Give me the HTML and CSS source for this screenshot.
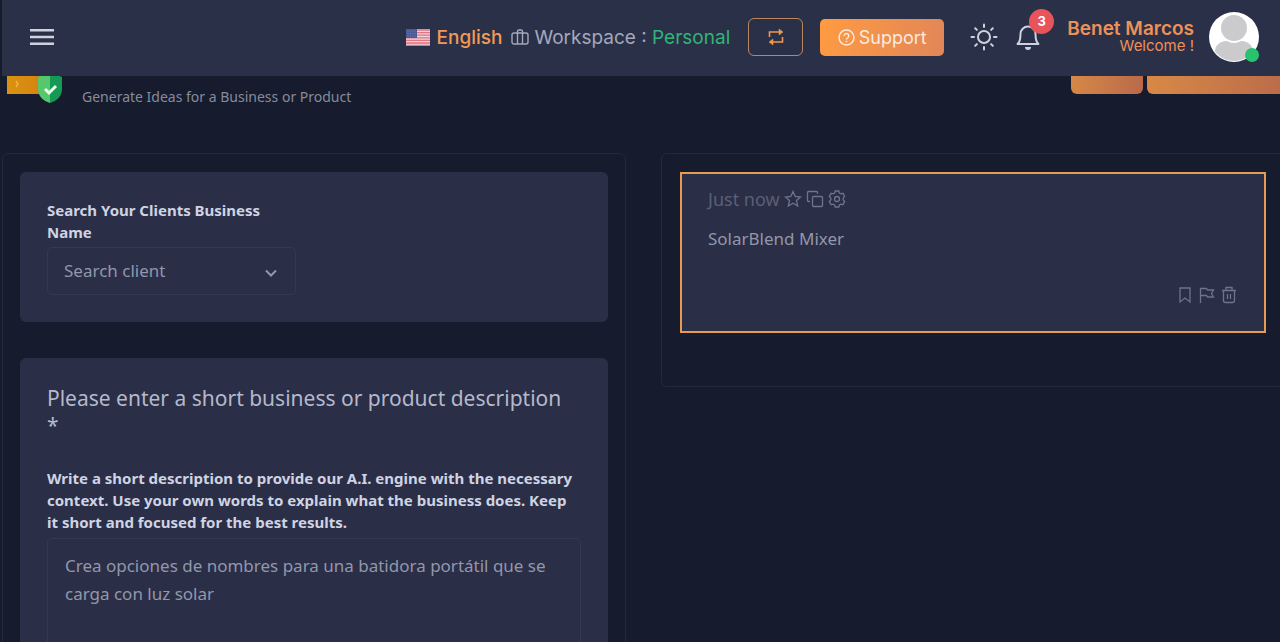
FILE: index.html
```html
<!DOCTYPE html>
<html lang="en">
<head>
<meta charset="utf-8">
<meta name="viewport" content="width=device-width, initial-scale=1">
<title>Generate Ideas</title>
<link rel="stylesheet" href="styles.css">
</head>
<body>
<div class="app">
  <header class="topbar">
    <button class="icon-btn menu" aria-label="Menu">
      <svg width="24" height="18" viewBox="0 0 24 18" stroke="currentColor" stroke-width="2.4"><path d="M0 2.2h24M0 9h24M0 15.8h24"/></svg>
    </button>
    <nav class="tools">
      <div class="locale">
        <a class="language" href="#">
          <svg width="24" height="17" viewBox="0 0 24 17"><rect width="24" height="17" fill="#efd3d8"/><path d="M0 1h24M0 3.6h24M0 6.2h24M0 8.8h24M0 11.4h24M0 14h24M0 16.5h24" stroke="#dc7682" stroke-width="1.3"/><rect width="11" height="9" fill="#4a5a94"/><path d="M1.5 2h9M1.5 4.5h9M1.5 7h9" stroke="#7582b2" stroke-dasharray="1 1.4"/></svg>
          <span>English</span>
        </a>
        <div class="workspace">
          <svg width="18" height="16" viewBox="0 0 18 16" fill="none" stroke="currentColor" stroke-width="1.4"><rect x="1" y="4" width="16" height="11" rx="2"/><path d="M6.500 15V2.500A1.500 1.500 0 0 1 8 1h2a1.500 1.500 0 0 1 1.500 1.500V15"/></svg>
          <span>Workspace : <span class="plan">Personal</span></span>
        </div>
      </div>
      <button class="swap" aria-label="Switch workspace">
        <svg width="18" height="20" viewBox="0 0 18 20" fill="none" stroke="currentColor" stroke-width="1.600"><path d="M2.500 10V5h11M15.500 10v5h-11"/><path d="M12 2l4 3-4 3zM6 12l-4 3 4 3z" fill="currentColor" stroke-width=".5"/></svg>
      </button>
      <button class="support">
        <svg width="17" height="17" viewBox="0 0 17 17" fill="none" stroke="currentColor" stroke-width="1.500"><circle cx="8.500" cy="8.500" r="7.500"/><path d="M6.200 6.800a2.300 2.300 0 1 1 3.500 2c-.8.5-1.200.8-1.200 1.600M8.500 11.800v1.400"/></svg>
        <span>Support</span>
      </button>
      <button class="icon-btn sun" aria-label="Light theme">
        <svg width="28" height="28" viewBox="0 0 28 28" fill="none" stroke="currentColor" stroke-width="2" stroke-linecap="round"><circle cx="14" cy="14" r="6"/><path d="M14 1.500v2.500M14 24v2.500M1.500 14H4M24 14h2.500M5.200 5.200l1.700 1.700M21.100 21.100l1.700 1.700M5.200 22.800l1.700-1.700M21.100 6.900l1.700-1.700"/></svg>
      </button>
      <button class="icon-btn bell" aria-label="Notifications">
        <svg width="24" height="26" viewBox="0 0 24 26" fill="none" stroke="currentColor" stroke-width="2" stroke-linejoin="round"><path d="M1.500 20c2.500-2 3-5 3-10a7.500 7.500 0 0 1 15 0c0 5 .5 8 3 10z"/><path d="M9 23h6a3 3 0 0 1-6 0z" fill="currentColor" stroke="none"/></svg>
        <span class="badge">3</span>
      </button>
      <a class="user" href="#">
        <span class="user-text"><strong>Benet Marcos</strong><span>Welcome !</span></span>
        <span class="avatar">
          <svg width="50" height="50" viewBox="0 0 50 50"><defs><clipPath id="round"><circle cx="25" cy="25" r="24"/></clipPath></defs><circle cx="25" cy="25" r="25" fill="#fff"/><g clip-path="url(#round)" fill="#cbcbcd"><circle cx="25" cy="16" r="13"/><path d="M6 50V40c0-7 5-11 12-11q7 4 14 0c7 0 12 4 12 11v10z"/></g></svg>
          <span class="online"></span>
        </span>
      </a>
    </nav>
  </header>

  <section class="page-head">
    <svg class="product" width="56" height="52" viewBox="0 0 56 52"><defs><linearGradient id="box"><stop offset="0" stop-color="#d9930f"/><stop offset=".65" stop-color="#d88712"/><stop offset="1" stop-color="#d06a1f"/></linearGradient></defs><rect y="8" width="42" height="34" fill="url(#box)"/><path d="M9 29l2 3-2 3" fill="none" stroke="#efb443" stroke-width="1.500"/><path d="M43 20l-12 5v12c0 7 5 12 12 14z" fill="#55c76c"/><path d="M43 20l12 5v12c0 7-5 12-12 14z" fill="#159a55"/><path d="M38 37l4 4 7-7" fill="none" stroke="#e9fff1" stroke-width="3"/></svg>
    <p class="subtitle">Generate Ideas for a Business or Product</p>
    <div class="page-actions">
      <button class="action" aria-label="Back"></button>
      <button class="action action-wide" aria-label="Open options"></button>
    </div>
  </section>

  <main class="columns">
    <form class="panel">
      <section class="card">
        <div class="client">
          <label class="label" for="client">Search Your Clients Business Name</label>
          <div class="select">
            <select id="client"><option>Search client</option></select>
            <svg width="12" height="8" viewBox="0 0 12 8" fill="none" stroke="currentColor" stroke-width="2"><path d="M1 1.500l5 5 5-5"/></svg>
          </div>
        </div>
      </section>
      <section class="card">
        <h2 class="question">Please enter a short business or product description<br>*</h2>
        <label class="label" for="description">Write a short description to provide our A.I. engine with the necessary context. Use your own words to explain what the business does. Keep it short and focused for the best results.</label>
        <textarea id="description" rows="6">Crea opciones de nombres para una batidora portátil que se carga con luz solar</textarea>
      </section>
    </form>

    <section class="panel results">
      <article class="result">
        <div class="meta">
          <span class="time">Just now</span>
          <button class="mini" aria-label="Favourite"><svg width="18" height="18" viewBox="0 0 18 18"><path d="M9 1.500l2.200 5 5.300.5-4 3.600 1.200 5.400L9 13.200 4.300 16l1.200-5.400-4-3.600 5.300-.5z"/></svg></button>
          <button class="mini" aria-label="Copy"><svg width="18" height="18" viewBox="0 0 18 18"><rect x="6.500" y="6.500" width="10" height="10" rx="1"/><path d="M4 11.500H2.500a1 1 0 0 1-1-1v-8a1 1 0 0 1 1-1h8a1 1 0 0 1 1 1V4"/></svg></button>
          <button class="mini" aria-label="Settings"><svg width="18" height="18" viewBox="0 0 18 18"><path d="M7.200 1h3.600l.6 2 1.400.8 2.100-.5 1.800 3.100L15.200 8v2l1.500 1.600-1.800 3.100-2.100-.5-1.400.8-.6 2H7.200l-.6-2-1.400-.8-2.100.5-1.800-3.100L2.800 10V8L1.300 6.400l1.800-3.100 2.100.5L6.600 3z"/><circle cx="9" cy="9" r="2.500"/></svg></button>
        </div>
        <p class="idea">SolarBlend Mixer</p>
        <div class="result-actions">
          <button class="mini" aria-label="Bookmark"><svg width="18" height="18" viewBox="0 0 18 18"><path d="M4 2h10v14l-5-4-5 4z"/></svg></button>
          <button class="mini" aria-label="Flag"><svg width="18" height="18" viewBox="0 0 18 18"><path d="M2.500 17V2.500h6l1 1.500h6l-2 3.500 2 3.500h-6l-1-1.500h-6"/></svg></button>
          <button class="mini" aria-label="Delete"><svg width="18" height="18" viewBox="0 0 18 18"><path d="M2 4.500h14M6 4V1.500h6V4M3.500 4.500v10a2 2 0 0 0 2 2h7a2 2 0 0 0 2-2v-10M7.500 8v5M10.500 8v5"/></svg></button>
        </div>
      </article>
    </section>
  </main>
</div>
</body>
</html>
```
FILE: styles.css
```css
* { box-sizing: border-box; }

body {
  margin: 0;
  background: #161b2d;
  color: #b9bfd0;
  font-family: "Noto Sans", sans-serif;
}

button {
  padding: 0;
  border: 0;
  background: none;
  color: inherit;
  font: inherit;
}

a { color: inherit; text-decoration: none; }
svg { display: block; flex: none; }

.app {
  height: 100vh;
  padding-left: 2px;
  overflow: hidden;
}

.topbar {
  position: relative;
  z-index: 1;
  display: flex;
  align-items: center;
  justify-content: space-between;
  height: 76px;
  padding: 0 21px 2px 28px;
  background: #2b3049;
  font-family: Inter, sans-serif;
}

.tools, .locale, .language, .workspace, .user { display: flex; align-items: center; }
.locale { gap: 9px; margin-right: 18px; font-size: 19px; white-space: nowrap; }
.language { gap: 7px; color: #f29a55; font-weight: 500; }
.workspace { gap: 5px; color: #a3a8bb; }
.plan { color: #2fb574; }

.icon-btn { display: flex; color: #cdd1e0; }
.sun { margin-right: 18px; }
.bell { position: relative; margin-right: 27px; }

.badge {
  position: absolute;
  top: -15px;
  left: 13px;
  width: 25px;
  border-radius: 50%;
  background: #e9535a;
  color: #fff;
  font-size: 13px;
  font-weight: 700;
  line-height: 25px;
  text-align: center;
}

.swap {
  display: grid;
  place-items: center;
  width: 55px;
  height: 38px;
  margin-right: 17px;
  border: 1px solid #b98660;
  border-radius: 6px;
  color: #ef9852;
}

.support {
  display: flex;
  align-items: center;
  justify-content: center;
  gap: 4px;
  width: 124px;
  height: 37px;
  margin-right: 26px;
  border-radius: 5px;
  background: linear-gradient(100deg, #ff9b42, #e18659);
  color: #fbeadd;
  font-size: 18px;
}

.user { gap: 15px; color: #ee9158; text-align: right; white-space: nowrap; }
.user-text { display: grid; font-size: 15px; line-height: 16px; }
.user-text strong { font-size: 19px; font-weight: 600; line-height: 18px; }
.avatar { position: relative; }

.online {
  position: absolute;
  right: 0;
  bottom: 0;
  width: 14px;
  height: 14px;
  border-radius: 50%;
  background: #29c36f;
}

.page-head {
  display: flex;
  align-items: flex-start;
  height: 101px;
  margin: -24px -12px 0 0;
  padding-left: 5px;
}

.subtitle {
  flex: 1;
  margin: 35px 0 0 19px;
  color: #868b9c;
  font-size: 14px;
  line-height: 20px;
}

.page-actions { display: flex; gap: 4px; }

.action {
  width: 72px;
  height: 42px;
  border-radius: 6px;
  background: linear-gradient(100deg, #d98a46, #b9694a);
}

.action-wide { width: 145px; }

.columns {
  display: grid;
  grid-template-columns: 1fr 1fr;
  align-items: start;
  gap: 35px;
  margin-right: -5px;
}

.panel {
  display: grid;
  gap: 36px;
  padding: 18px 17px;
  border: 1px solid #23283b;
  border-radius: 6px;
}

.card {
  padding: 27px;
  border-radius: 6px;
  background: #2a2e47;
}

.client { width: 249px; }

.label {
  display: block;
  color: #cfd3e2;
  font-size: 15px;
  font-weight: 700;
  line-height: 22px;
}

.select { position: relative; margin-top: 4px; color: #9297ab; }
.select svg { position: absolute; top: 22px; right: 19px; pointer-events: none; }

select, textarea {
  display: block;
  width: 100%;
  border: 1px solid #343952;
  border-radius: 5px;
  background: transparent;
  color: #9297ab;
  font: 17px/28px "Noto Sans", sans-serif;
}

select { height: 48px; padding: 0 16px; appearance: none; }
textarea { margin-top: 5px; padding: 13px 17px; resize: none; }

.question {
  margin: 0 0 28px;
  color: #b4b9cb;
  font-size: 21px;
  font-weight: 400;
  line-height: 27px;
}

.results { padding: 18px 18px 53px; }

.result {
  padding: 13px 26px 27px;
  border: 2px solid #e89b50;
  background: #2a2e47;
}

.meta, .result-actions { display: flex; align-items: center; gap: 4px; color: #6f748a; }
.time { color: #5a5f76; font-size: 18px; line-height: 24px; }
.mini svg { fill: none; stroke: currentColor; stroke-width: 1.300; }

.idea {
  margin: 15px 0 34px;
  color: #9297ab;
  font-size: 17px;
  line-height: 26px;
}

.result-actions { justify-content: flex-end; }
```
